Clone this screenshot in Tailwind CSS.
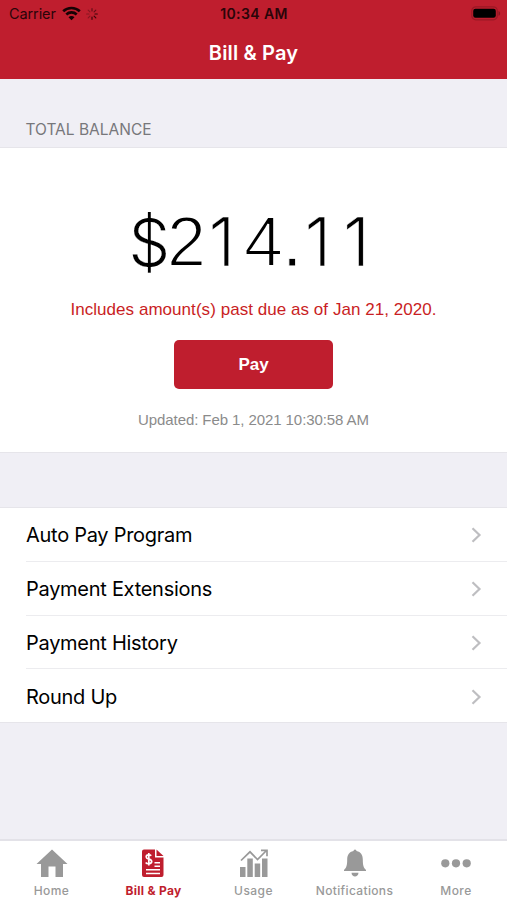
<!DOCTYPE html>
<html lang="en">
<head>
<meta charset="utf-8">
<title>Bill &amp; Pay</title>
<script src="https://cdn.jsdelivr.net/npm/@tailwindcss/browser@4"></script>
</head>
<body class="w-[507px] h-[900px] overflow-hidden bg-[#f0eff5] font-['Inter',sans-serif] text-black flex flex-col">
<header class="h-[79px] shrink-0 bg-[#bf1e2e] flex flex-col">
  <div class="h-[27px] grid grid-cols-3 items-center pl-[9px] pr-[6px] text-[#2a0509]">
    <div class="flex items-center">
      <span class="text-[14.5px] leading-[27px] tracking-[-0.1px]">Carrier</span>
      <svg class="ml-[6px]" width="19" height="15" viewBox="0 0 19 15" fill="none" stroke="#160204" stroke-width="2.6"><path d="M1.2 5.3C5.8.8 13.2.8 17.8 5.3"/><path d="M4.3 8.5c2.9-2.8 7.5-2.8 10.4 0"/><path d="M9.5 14.3 6.5 11.2c1.7-1.5 4.3-1.5 6 0z" fill="#160204" stroke="none"/></svg>
      <svg class="ml-[5px]" width="12" height="12" viewBox="-6 -6 12 12" stroke-width="1.2" stroke-linecap="round"><path d="M0-3V-5.3M2.1-2.1 3.8-3.8" stroke="#650d17"/><path d="M3 0H5.3M2.1 2.1 3.8 3.8M0 3V5.3" stroke="#3b0509"/><path d="M-2.1 2.1-3.8 3.8M-3 0H-5.3M-2.1-2.1-3.8-3.8" stroke="#861621"/></svg>
    </div>
    <div class="text-center text-[14px] leading-[27px] font-semibold tracking-[0.4px] -ml-[2px]">10:34 AM</div>
    <div class="flex justify-end">
      <svg width="30" height="15" viewBox="0 0 30 15"><rect x=".8" y=".8" width="25.5" height="13" rx="4" fill="none" stroke="#9b1825" stroke-width="1.2"/><rect x="2.2" y="2.8" width="22.600" height="9" rx="2.2" fill="#000"/><path d="M27.5 5c2.2.8 2.2 4 0 4.8z" fill="#861621"/></svg>
    </div>
  </div>
  <h1 class="h-[52px] text-center text-white text-[20px] leading-[52px] font-semibold tracking-[0.15px]">Bill &amp; Pay</h1>
</header>
<main class="flex-1 flex flex-col">
  <h2 class="h-[69px] border-b border-[#e6e5ea] pl-[25.500px] pt-[40px] text-[15.5px] leading-[22px] text-[#77777b]">TOTAL BALANCE</h2>
  <section class="h-[305px] bg-white border-b border-[#e6e5ea] flex flex-col items-center font-['Liberation_Sans',sans-serif]">
    <div class="mt-[52px] h-[84px] flex items-baseline text-[70px] leading-[84px] text-center whitespace-nowrap [-webkit-text-stroke:1.8px_white]"><span class="w-[38.5px] font-['Inter',sans-serif] font-light text-[66px] [-webkit-text-stroke:0.2px_white]">$</span><span class="w-[38.5px]">2</span><span class="w-[38.5px] font-['Inter',sans-serif] font-light text-[67px] text-right pr-[9px] [-webkit-text-stroke:0.4px_white]">1</span><span class="w-[38.5px]">4</span><span class="w-[19px] [-webkit-text-stroke:0.8px_white]">.</span><span class="w-[38.5px] font-['Inter',sans-serif] font-light text-[67px] text-right pr-[9px] [-webkit-text-stroke:0.4px_white]">1</span><span class="w-[38.5px] font-['Inter',sans-serif] font-light text-[67px] text-right pr-[9px] [-webkit-text-stroke:0.4px_white]">1</span></div>
    <p class="mt-[15px] text-[17px] leading-[22px] tracking-[0.05px] text-[#c91e24] whitespace-nowrap">Includes amount(s) past due as of Jan 21, 2020.</p>
    <button class="mt-[19px] w-[159px] h-[49px] rounded-[5px] bg-[#bf1e2e] text-white text-[17px] font-bold pt-[1px]">Pay</button>
    <p class="mt-[21px] text-[15px] leading-[20px] tracking-[-0.08px] text-[#8b8b8b] whitespace-nowrap">Updated: Feb 1, 2021 10:30:58 AM</p>
  </section>
  <nav class="mt-[54px] h-[216px] bg-white border-t border-b border-[#e6e5ea] pl-[26px] flex flex-col text-[20px] tracking-[-0.28px]">
    <a class="flex-1 flex items-center justify-between pt-[2px] pr-[25px] border-b border-[#ececef]"><span>Auto Pay Program</span><svg width="11" height="16" viewBox="0 0 11 16" fill="none" stroke="#bebec1" stroke-width="2.2"><path d="m1.5 1.2 7 6.8-7 6.8"/></svg></a>
    <a class="flex-1 flex items-center justify-between pt-[2px] pr-[25px] border-b border-[#ececef]"><span>Payment Extensions</span><svg width="11" height="16" viewBox="0 0 11 16" fill="none" stroke="#bebec1" stroke-width="2.2"><path d="m1.5 1.2 7 6.8-7 6.8"/></svg></a>
    <a class="flex-1 flex items-center justify-between pt-[2px] pr-[25px] border-b border-[#ececef]"><span>Payment History</span><svg width="11" height="16" viewBox="0 0 11 16" fill="none" stroke="#bebec1" stroke-width="2.2"><path d="m1.5 1.2 7 6.8-7 6.8"/></svg></a>
    <a class="flex-1 flex items-center justify-between pt-[2px] pr-[25px]"><span>Round Up</span><svg width="11" height="16" viewBox="0 0 11 16" fill="none" stroke="#bebec1" stroke-width="2.2"><path d="m1.5 1.2 7 6.8-7 6.8"/></svg></a>
  </nav>
</main>
<footer class="h-[61px] shrink-0 bg-white border-t-2 border-[#e3e2e8] grid grid-cols-[103px_101px_100px_101px_102px] text-[#999] text-[12px] leading-[16px] font-medium tracking-[0.45px] text-center">
  <a class="flex flex-col items-center pt-[6px]"><svg width="32" height="32" viewBox="0 0 32 32" fill="#999"><path d="M16 2.5 31.5 17H27v13h-7.500V19.500h-7V30H5V17H.5z"/></svg><span class="mt-[4px]">Home</span></a>
  <a class="flex flex-col items-center pt-[6px] text-[#bf1e2e] font-bold tracking-[0.3px]"><svg class="-ml-[2px]" width="32" height="32" viewBox="0 0 32 32"><path d="M7 2.500h11v8h8.500V28q0 2-2 2H7q-2 0-2-2V4.500q0-2 2-2z" fill="#bf1e2e"/><path d="M19.500 2.500v6.500h7z" fill="#bf1e2e"/><path d="M14.200 8.700c-.8-1-5-1.500-5 1.200 0 2.800 5.500 1.700 5.500 4.700 0 2.700-4.800 2.500-6 .8M11.800 6v12.500" fill="none" stroke="#fff" stroke-width="1.700"/><path d="M17.500 15.700h5.500M17.500 19.200h5.500M9 22.700h14M9 26.500h14" stroke="#fff" stroke-width="1.500"/></svg><span class="mt-[4px]">Bill &amp; Pay</span></a>
  <a class="flex flex-col items-center pt-[6px] pr-[1px]"><svg width="32" height="32" viewBox="0 0 32 32" fill="#999"><path d="M2 20h5.500v10H2zM9.300 11.500h5.500V30H9.300zM16.700 16.500h5.500V30h-5.500zM24 11.500h5.500V30H24z"/><path d="m3 13.500 9-8.700 7.500 7.700L28 4M23 3.300h6v6" fill="none" stroke="#999" stroke-width="1.700"/></svg><span class="mt-[4px]">Usage</span></a>
  <a class="flex flex-col items-center pt-[6px] tracking-[0.35px]"><svg width="32" height="32" viewBox="0 0 32 32" fill="#999"><path d="M14.500 4q0-1.500 1.500-1.500T17.500 4c4.500.8 6.300 4.300 6.300 8.500 0 6 .7 8 3.200 10.500V24H5v-1c2.500-2.500 3.200-4.500 3.200-10.500 0-4.200 1.800-7.700 6.300-8.500zM12.500 25.700h7c-.2 5-6.800 5-7 0z"/></svg><span class="mt-[4px]">Notifications</span></a>
  <a class="flex flex-col items-center pt-[6px]"><svg width="32" height="32" viewBox="0 0 32 32" fill="#999"><circle cx="5.300" cy="16.300" r="4.100"/><circle cx="16" cy="16.300" r="4.100"/><circle cx="26.700" cy="16.300" r="4.100"/></svg><span class="mt-[4px]">More</span></a>
</footer>
</body>
</html>
